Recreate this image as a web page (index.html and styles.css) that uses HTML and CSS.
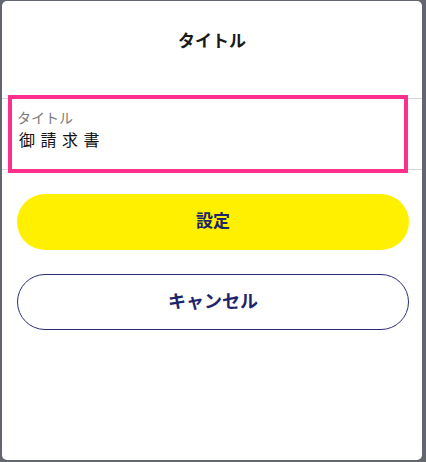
FILE: index.html
```
<!DOCTYPE html>
<html lang="ja">
<head>
<meta charset="utf-8">
<link rel="stylesheet" href="styles.css">
</head>
<body>
<div class="modal">
  <div class="header"><h1 class="title">タイトル</h1></div>
  <div class="field">
    <div class="field-box">
      <div class="field-label">タイトル</div>
      <div class="field-value">御請求書</div>
    </div>
  </div>
  <div class="actions">
    <button class="btn btn-primary">設定</button>
    <button class="btn btn-secondary">キャンセル</button>
  </div>
</div>
</body>
</html>
```
FILE: styles.css
```
html, body {
  margin: 0;
  padding: 0;
}
body {
  background: #62666e;
  width: 426px;
  height: 462px;
  overflow: hidden;
  font-family: "Noto Sans CJK JP", "Noto Sans", sans-serif;
}
.modal {
  margin: 1px 4px 0 2px;
  height: 459px;
  background: #fff;
  border-radius: 5px;
  display: flex;
  flex-direction: column;
}
.header {
  height: 77px;
  display: flex;
  align-items: center;
  justify-content: center;
  margin-bottom: 20px;
}
.title {
  margin: 0;
  font-size: 17px;
  font-weight: 700;
  color: #1a1a1a;
  line-height: 24px;
}
.field {
  border-top: 1px solid #d6d6d6;
  border-bottom: 1px solid #d6d6d6;
  height: 70px;
  display: flex;
}
.field-box {
  flex: 1;
  margin: 0 18px 0 10px;
  outline: 4px solid #ff2f8e;
  padding: 8px 5px 0 5px;
}
.field-label {
  font-size: 14px;
  line-height: 20px;
  color: #7a7a7a;
}
.field-value {
  font-size: 16px;
  line-height: 22px;
  color: #111;
  letter-spacing: 5.5px;
  padding-left: 2px;
  margin-top: 1px;
}
.actions {
  display: flex;
  flex-direction: column;
  gap: 24px;
  margin: 24px 13px 0 15px;
}
.btn {
  height: 56px;
  border-radius: 28px;
  font-family: "Noto Sans CJK JP", "Noto Sans", sans-serif;
  font-weight: 700;
  color: #1e246a;
  cursor: pointer;
  padding: 0 0 5px 0;
}
.btn-primary {
  background: #fff000;
  border: none;
  font-size: 17px;
}
.btn-secondary {
  background: #fff;
  border: 1px solid #2a2e78;
  font-size: 18px;
}
```
